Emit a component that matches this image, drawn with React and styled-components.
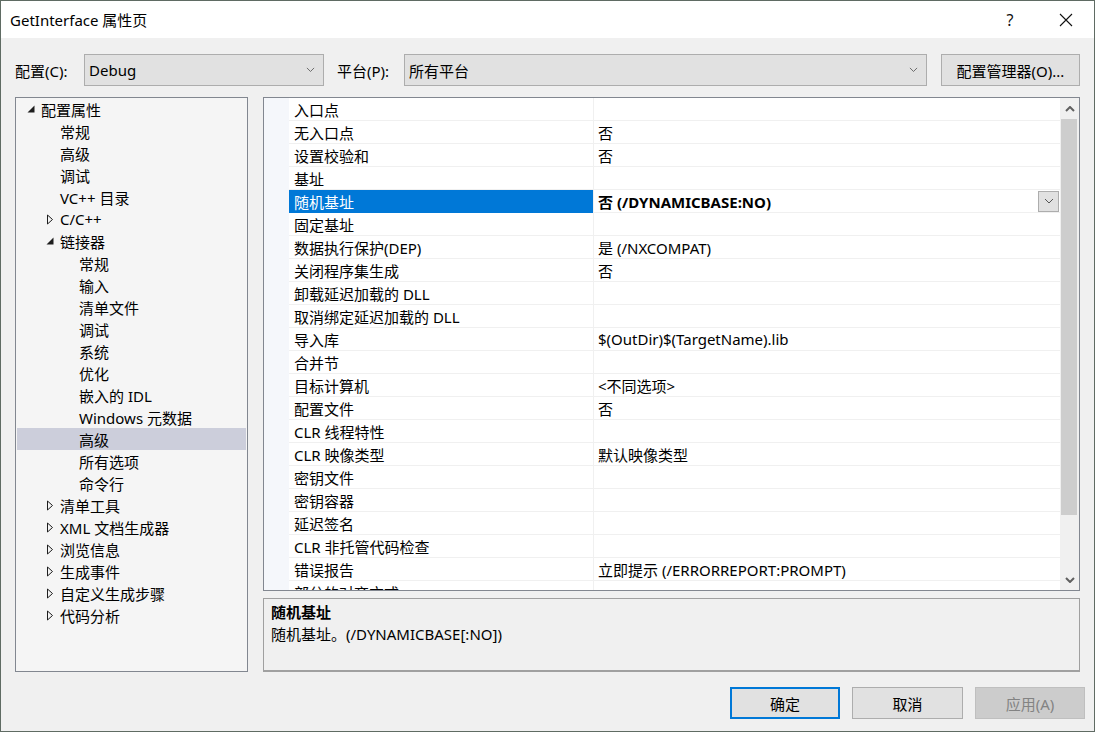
import React from "react";
import styled, { createGlobalStyle } from "styled-components";

const GlobalStyle = createGlobalStyle`
  html, body {
    margin: 0;
    padding: 0;
    background: #ffffff;
  }
  * {
    box-sizing: border-box;
  }
`;

const FONT = `"Segoe UI", "Noto Sans", "Noto Sans CJK SC", sans-serif`;

const Window = styled.div`
  width: 1095px;
  height: 732px;
  border: 1px solid #5f6b63;
  background: #f0f0f0;
  font-family: ${FONT};
  font-size: 15px;
  color: #000;
  display: flex;
  flex-direction: column;
  overflow: hidden;
`;

const TitleBar = styled.div`
  height: 37px;
  background: #fff;
  display: flex;
  align-items: center;
  padding-left: 9px;
  flex-shrink: 0;
`;

const TitleText = styled.div`
  flex: 1;
  font-size: 15px;
`;

const TitleButton = styled.div`
  width: 56px;
  height: 37px;
  display: flex;
  align-items: center;
  justify-content: center;
  font-size: 16px;
  color: #111;
`;

const Body = styled.div`
  flex: 1;
  display: flex;
  flex-direction: column;
  padding: 16px 14px 0 14px;
`;

const ConfigRow = styled.div`
  display: flex;
  align-items: center;
  height: 32px;
`;

const Label = styled.div`
  width: ${(p) => p.w}px;
  flex-shrink: 0;
`;

const Combo = styled.div`
  width: ${(p) => p.w}px;
  height: 32px;
  background: #e1e1e1;
  border: 1px solid #adadad;
  display: flex;
  align-items: center;
  padding: 0 8px 0 4px;
  margin-right: ${(p) => p.mr || 0}px;
`;

const ComboText = styled.div`
  flex: 1;
`;

const Button = styled.div`
  width: ${(p) => p.w}px;
  height: 32px;
  background: ${(p) => (p.disabled ? "#cccccc" : "#e1e1e1")};
  border: ${(p) =>
    p.primary ? "2px solid #0078d7" : p.disabled ? "1px solid #bfbfbf" : "1px solid #adadad"};
  color: ${(p) => (p.disabled ? "#838383" : "#000")};
  display: flex;
  align-items: center;
  justify-content: center;
  flex-shrink: 0;
`;

const Main = styled.div`
  display: flex;
  gap: 15px;
  margin-top: 11px;
  height: 575px;
`;

const TreePanel = styled.div`
  width: 233px;
  border: 1px solid #828790;
  background: #f5f5f5;
  padding: 0 1px;
`;

const TreeRow = styled.div`
  height: 22px;
  display: flex;
  align-items: center;
  padding-left: ${(p) => 8 + p.level * 19}px;
  background: ${(p) => (p.selected ? "#cccedb" : "transparent")};
  white-space: nowrap;
`;

const Expander = styled.div`
  width: 16px;
  height: 22px;
  display: flex;
  align-items: center;
  justify-content: flex-start;
  padding-left: 2px;
  flex-shrink: 0;
`;

const RightCol = styled.div`
  flex: 1;
  display: flex;
  flex-direction: column;
  gap: 7px;
`;

const GridPanel = styled.div`
  height: 494px;
  border: 1px solid #828790;
  background: #fff;
  display: flex;
  overflow: hidden;
`;

const GridRows = styled.div`
  flex: 1;
  overflow: hidden;
`;

const GridRow = styled.div`
  height: 23px;
  display: flex;
`;

const Margin = styled.div`
  width: 25px;
  flex-shrink: 0;
  background: #f5f7fb;
`;

const NameCell = styled.div`
  width: 304px;
  flex-shrink: 0;
  padding-left: 5px;
  display: flex;
  align-items: center;
  white-space: nowrap;
  background: ${(p) => (p.selected ? "#0078d7" : "#fff")};
  color: ${(p) => (p.selected ? "#fff" : "#000")};
  border-bottom: 1px solid ${(p) => (p.selected ? "#0078d7" : "#f0f0f0")};
`;

const ValueCell = styled.div`
  flex: 1;
  padding-left: 4px;
  display: flex;
  align-items: center;
  white-space: nowrap;
  font-weight: ${(p) => (p.selected ? 700 : 400)};
  border-left: 1px solid #f0f0f0;
  border-bottom: 1px solid #f0f0f0;
  padding-right: 1px;
`;

const ValueText = styled.div`
  flex: 1;
`;

const DropButton = styled.div`
  width: 21px;
  height: 21px;
  border: 1px solid #adadad;
  background: #e1e1e1;
  display: flex;
  align-items: center;
  justify-content: center;
`;

const ScrollBar = styled.div`
  width: 19px;
  flex-shrink: 0;
  background: #f0f0f0;
  display: flex;
  flex-direction: column;
`;

const ScrollArrow = styled.div`
  height: 21px;
  display: flex;
  align-items: center;
  justify-content: center;
  flex-shrink: 0;
`;

const ScrollTrack = styled.div`
  flex: 1;
  display: flex;
  flex-direction: column;
`;

const ScrollThumb = styled.div`
  height: 396px;
  background: #cdcdcd;
  margin: 0 2px 0 1px;
`;

const DescPanel = styled.div`
  height: 74px;
  border: 1px solid #a0a0a0;
  border-bottom: 2px solid #a0a0a0;
  padding: 2px 7px;
`;

const DescTitle = styled.div`
  font-weight: 700;
  line-height: 22px;
`;

const DescText = styled.div`
  line-height: 22px;
`;

const Footer = styled.div`
  display: flex;
  justify-content: flex-end;
  gap: 12px;
  margin-top: 15px;
  margin-right: -5px;
`;

const OpenTri = () => (
  <svg width="8" height="8" viewBox="0 0 8 8">
    <path d="M7.5 0.5 L7.5 7.5 L0.5 7.5 Z" fill="#1e1e1e" />
  </svg>
);

const ClosedTri = () => (
  <svg width="8" height="11" viewBox="0 0 8 11">
    <path d="M1.5 1 L6.5 5.5 L1.5 10 Z" fill="none" stroke="#1e1e1e" strokeWidth="1" />
  </svg>
);

const Chevron = ({ dir = "down", color = "#444", size = 10, w = 1 }) => (
  <svg width={size} height={size * 0.6} viewBox="0 0 10 6">
    <path
      d={dir === "down" ? "M1 1 L5 5 L9 1" : "M1 5 L5 1 L9 5"}
      fill="none"
      stroke={color}
      strokeWidth={w}
    />
  </svg>
);

const tree = [
  { level: 0, exp: "open", text: "配置属性" },
  { level: 1, text: "常规" },
  { level: 1, text: "高级" },
  { level: 1, text: "调试" },
  { level: 1, text: "VC++ 目录" },
  { level: 1, exp: "closed", text: "C/C++" },
  { level: 1, exp: "open", text: "链接器" },
  { level: 2, text: "常规" },
  { level: 2, text: "输入" },
  { level: 2, text: "清单文件" },
  { level: 2, text: "调试" },
  { level: 2, text: "系统" },
  { level: 2, text: "优化" },
  { level: 2, text: "嵌入的 IDL" },
  { level: 2, text: "Windows 元数据" },
  { level: 2, text: "高级", selected: true },
  { level: 2, text: "所有选项" },
  { level: 2, text: "命令行" },
  { level: 1, exp: "closed", text: "清单工具" },
  { level: 1, exp: "closed", text: "XML 文档生成器" },
  { level: 1, exp: "closed", text: "浏览信息" },
  { level: 1, exp: "closed", text: "生成事件" },
  { level: 1, exp: "closed", text: "自定义生成步骤" },
  { level: 1, exp: "closed", text: "代码分析" },
];

const props = [
  ["入口点", ""],
  ["无入口点", "否"],
  ["设置校验和", "否"],
  ["基址", ""],
  ["随机基址", "否 (/DYNAMICBASE:NO)", true],
  ["固定基址", ""],
  ["数据执行保护(DEP)", "是 (/NXCOMPAT)"],
  ["关闭程序集生成", "否"],
  ["卸载延迟加载的 DLL", ""],
  ["取消绑定延迟加载的 DLL", ""],
  ["导入库", "$(OutDir)$(TargetName).lib"],
  ["合并节", ""],
  ["目标计算机", "<不同选项>"],
  ["配置文件", "否"],
  ["CLR 线程特性", ""],
  ["CLR 映像类型", "默认映像类型"],
  ["密钥文件", ""],
  ["密钥容器", ""],
  ["延迟签名", ""],
  ["CLR 非托管代码检查", ""],
  ["错误报告", "立即提示 (/ERRORREPORT:PROMPT)"],
  ["部分的对齐方式", ""],
];

export default function App() {
  return (
    <>
      <GlobalStyle />
      <Window>
        <TitleBar>
          <TitleText>GetInterface 属性页</TitleText>
          <TitleButton>?</TitleButton>
          <TitleButton>
            <svg width="14" height="14" viewBox="0 0 14 14">
              <path d="M1 1 L13 13 M13 1 L1 13" stroke="#111" strokeWidth="1.1" />
            </svg>
          </TitleButton>
        </TitleBar>
        <Body>
          <ConfigRow>
            <Label w={69}>配置(C):</Label>
            <Combo w={240} mr={13}>
              <ComboText>Debug</ComboText>
              <Chevron color="#606060" size={9} />
            </Combo>
            <Label w={67}>平台(P):</Label>
            <Combo w={523} mr={14}>
              <ComboText>所有平台</ComboText>
              <Chevron color="#606060" size={9} />
            </Combo>
            <Button w={139}>配置管理器(O)...</Button>
          </ConfigRow>
          <Main>
            <TreePanel>
              {tree.map((t, i) => (
                <TreeRow key={i} level={t.level} selected={t.selected}>
                  <Expander>
                    {t.exp === "open" && <OpenTri />}
                    {t.exp === "closed" && <ClosedTri />}
                  </Expander>
                  {t.text}
                </TreeRow>
              ))}
            </TreePanel>
            <RightCol>
              <GridPanel>
                <GridRows>
                  {props.map(([name, value, sel], i) => (
                    <GridRow key={i}>
                      <Margin />
                      <NameCell selected={sel}>{name}</NameCell>
                      <ValueCell selected={sel}>
                        <ValueText>{value}</ValueText>
                        {sel && (
                          <DropButton>
                            <Chevron color="#555" size={10} />
                          </DropButton>
                        )}
                      </ValueCell>
                    </GridRow>
                  ))}
                </GridRows>
                <ScrollBar>
                  <ScrollArrow>
                    <Chevron dir="up" color="#606060" size={10} w={2} />
                  </ScrollArrow>
                  <ScrollTrack>
                    <ScrollThumb />
                  </ScrollTrack>
                  <ScrollArrow>
                    <Chevron dir="down" color="#606060" size={10} w={2} />
                  </ScrollArrow>
                </ScrollBar>
              </GridPanel>
              <DescPanel>
                <DescTitle>随机基址</DescTitle>
                <DescText>随机基址。(/DYNAMICBASE[:NO])</DescText>
              </DescPanel>
            </RightCol>
          </Main>
          <Footer>
            <Button w={110} primary>
              确定
            </Button>
            <Button w={111}>取消</Button>
            <Button w={110} disabled>
              应用(A)
            </Button>
          </Footer>
        </Body>
      </Window>
    </>
  );
}
